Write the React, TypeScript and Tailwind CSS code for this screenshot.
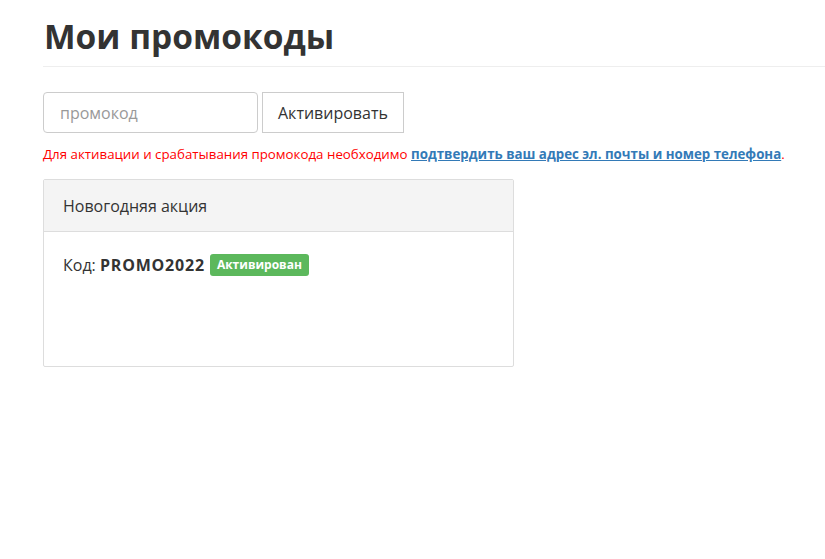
export default function App() {
  return (
    <div className="min-h-[559px] bg-white font-['Open_Sans',sans-serif] text-[#333] overflow-hidden">
      <div className="pl-[43px]">
        <h1 className="pt-[15px] pb-[8px] pl-px text-[33.5px] font-bold leading-[43px] text-[#333] border-b border-[#eee] w-[900px]">
          Мои промокоды
        </h1>

        <div className="mt-[25px] flex gap-[4px]">
          <input
            placeholder="промокод"
            className="w-[215px] h-[41px] rounded-[4px] border border-[#ccc] px-[16px] text-[16px] text-[#555] placeholder:text-[#999] outline-none"
          />
          <button className="h-[41px] px-[15px] border border-[#ccc] bg-white text-[16px] text-[#333]">
            Активировать
          </button>
        </div>

        <p className="mt-[12px] text-[13.3px] leading-[18px] text-[#ff0000]">
          Для активации и срабатывания промокода необходимо{' '}
          <a href="#" className="font-bold text-[#337ab7] underline">
            подтвердить ваш адрес эл. почты и номер телефона
          </a>
          .
        </p>

        <div className="mt-[16px] w-[471px] border border-[#ddd] rounded-[2px]">
          <div className="h-[52px] flex items-center px-[19px] bg-[#f4f4f4] border-b border-[#ddd] text-[16px] text-[#333]">
            Новогодняя акция
          </div>
          <div className="h-[134px] px-[19px] pt-[21px]">
            <div className="flex items-center text-[16px] text-[#333]">
              <span>Код:&nbsp;</span>
              <span className="font-bold tracking-[0.8px]">PROMO2022</span>
              <span className="ml-[5px] rounded-[3px] bg-[#5cb85c] px-[7px] py-[2px] text-[12px] font-bold leading-[18px] text-white">
                Активирован
              </span>
            </div>
          </div>
        </div>
      </div>
    </div>
  );
}
